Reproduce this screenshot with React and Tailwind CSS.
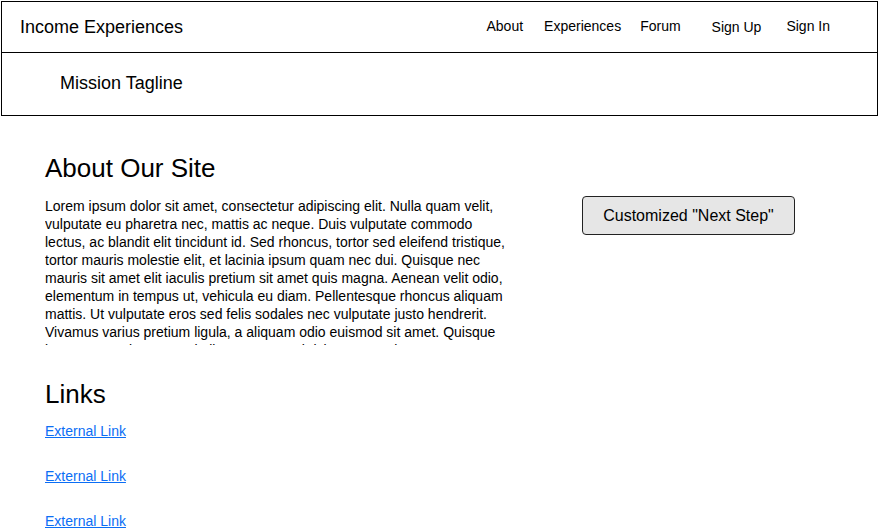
import React from "react";

const links = ["External Link", "External Link", "External Link"];

function App() {
  return (
    <div className="w-[878px] h-[532px] overflow-hidden bg-white text-black font-['Liberation_Sans',Arial,sans-serif] pt-px pl-px">
      {/* ================= HEADER ================= */}
      <div className="w-[877px] h-[115px] border border-black flex flex-col">
        <div className="h-[51px] border-b border-black flex items-center">
          <span className="ml-[18px] text-[18px]">Income Experiences</span>
          <nav className="ml-auto mb-[2px] flex items-center text-[14px] mr-[47px]">
            <a className="mr-[21px]">About</a>
            <a className="mr-[19px]">Experiences</a>
            <a className="mr-[31px]">Forum</a>
            <a className="mr-[25px] translate-y-[1px]">Sign Up</a>
            <a>Sign In</a>
          </nav>
        </div>
        <div className="flex-1 flex items-center pb-[2px]">
          <span className="ml-[58px] text-[18px]">Mission Tagline</span>
        </div>
      </div>

      {/* ================= ABOUT ================= */}
      <div className="flex pl-[44px] pt-[37px]">
        <div className="w-[466px]">
          <h1 className="text-[26px] leading-[30px]">About Our Site</h1>
          <p className="mt-[14px] text-[14px] leading-[18px] h-[148px] overflow-hidden">
            Lorem ipsum dolor sit amet, consectetur adipiscing elit. Nulla quam velit, vulputate eu
            pharetra nec, mattis ac neque. Duis vulputate commodo lectus, ac blandit elit tincidunt id.
            Sed rhoncus, tortor sed eleifend tristique, tortor mauris molestie elit, et lacinia ipsum
            quam nec dui. Quisque nec mauris sit amet elit iaculis pretium sit amet quis magna. Aenean
            velit odio, elementum in tempus ut, vehicula eu diam. Pellentesque rhoncus aliquam mattis.
            Ut vulputate eros sed felis sodales nec vulputate justo hendrerit. Vivamus varius pretium
            ligula, a aliquam odio euismod sit amet. Quisque laoreet sem sit amet orci ullamcorper at
            ultricies metus viverra.
          </p>
        </div>
        <div className="ml-[71px] pt-[43px]">
          <button className="w-[213px] h-[39px] rounded-[4px] border border-[#222] bg-[#e6e6e6] text-[16px]">
            Customized "Next Step"
          </button>
        </div>
      </div>

      {/* ================= LINKS ================= */}
      <div className="pl-[44px] pt-[34px]">
        <h2 className="text-[26px] leading-[30px]">Links</h2>
        <div className="mt-[13px] flex flex-col gap-[27px] text-[14px] leading-[18px]">
          {links.map((l, i) => (
            <a key={i} href="#" className="text-[#0b6ef5] underline w-fit">
              {l}
            </a>
          ))}
        </div>
      </div>
    </div>
  );
}

export default App;
